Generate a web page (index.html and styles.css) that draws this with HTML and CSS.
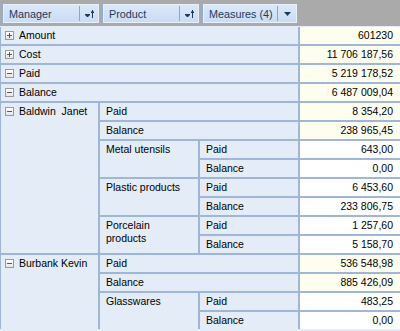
FILE: index.html
```html
<!DOCTYPE html>
<html>
<head>
<meta charset="utf-8">
<link rel="stylesheet" href="styles.css">
</head>
<body>
<div class="pivot">
  <div class="toolbar">
    <div class="fbtn w98"><span class="cap">Manager</span><span class="sep"></span><span class="ico"><svg width="10" height="9" viewBox="0 0 10 9"><path d="M0 5.5h5M0.5 6.5h4M1.5 7.5h2" stroke="#1e395b" stroke-width="1"/><path d="M7.5 1v8M6 3.5h3M6.5 2.5h2" stroke="#1e395b" stroke-width="1"/></svg></span></div>
    <div class="fbtn w98"><span class="cap">Product</span><span class="sep"></span><span class="ico"><svg width="10" height="9" viewBox="0 0 10 9"><path d="M0 5.5h5M0.5 6.5h4M1.5 7.5h2" stroke="#1e395b" stroke-width="1"/><path d="M7.5 1v8M6 3.5h3M6.5 2.5h2" stroke="#1e395b" stroke-width="1"/></svg></span></div>
    <div class="fbtn w96"><span class="cap">Measures (4)</span><span class="sep"></span><span class="ico"><svg width="7" height="4" viewBox="0 0 7 4"><path d="M0 0h7L3.5 4z" fill="#1e395b"/></svg></span></div>
  </div>
  <div class="grid">
    <div class="lbl s3"><span class="exp plus"></span>Amount</div><div class="val tot">601230</div>
    <div class="lbl s3"><span class="exp plus"></span>Cost</div><div class="val tot">11 706 187,56</div>
    <div class="lbl s3"><span class="exp minus"></span>Paid</div><div class="val tot">5 219 178,52</div>
    <div class="lbl s3"><span class="exp minus"></span>Balance</div><div class="val tot">6 487 009,04</div>

    <div class="lbl r8 top"><span class="exp minus"></span>Baldwin&nbsp; Janet</div>
    <div class="lbl s2 pad">Paid</div><div class="val tot">8 354,20</div>
    <div class="lbl s2 pad">Balance</div><div class="val tot">238 965,45</div>
    <div class="lbl r2 pad top">Metal utensils</div>
    <div class="lbl pad">Paid</div><div class="val">643,00</div>
    <div class="lbl pad">Balance</div><div class="val">0,00</div>
    <div class="lbl r2 pad top">Plastic products</div>
    <div class="lbl pad">Paid</div><div class="val">6 453,60</div>
    <div class="lbl pad">Balance</div><div class="val">233 806,75</div>
    <div class="lbl r2 pad top">Porcelain products</div>
    <div class="lbl pad">Paid</div><div class="val">1 257,60</div>
    <div class="lbl pad">Balance</div><div class="val">5 158,70</div>

    <div class="lbl r4 top"><span class="exp minus"></span>Burbank Kevin</div>
    <div class="lbl s2 pad">Paid</div><div class="val tot">536 548,98</div>
    <div class="lbl s2 pad">Balance</div><div class="val tot">885 426,09</div>
    <div class="lbl r2 pad top">Glasswares</div>
    <div class="lbl pad">Paid</div><div class="val">483,25</div>
    <div class="lbl pad">Balance</div><div class="val">0,00</div>
  </div>
</div>
</body>
</html>
```

FILE: styles.css
```css
html, body {
  margin: 0;
  padding: 0;
  width: 400px;
  height: 331px;
  overflow: hidden;
  background: #e4ecf7;
}
.pivot {
  font-family: "Liberation Sans", Arial, sans-serif;
  font-size: 10.5px;
  color: #000;
}
.toolbar {
  height: 26px;
  background: #aaaaaa;
  display: flex;
  gap: 2px;
  padding: 3px 0 0 2px;
  box-sizing: border-box;
}
.fbtn {
  height: 21px;
  box-sizing: border-box;
  border: 1px solid #8eaedb;
  background: linear-gradient(#dce8f8, #c9dcf4);
  box-shadow: inset 0 0 0 1px #e8f0fb;
  display: flex;
  align-items: center;
  color: #1e395b;
  font-size: 10.8px;
}
.w98 { width: 98px; }
.w96 { width: 96px; }
.cap {
  flex: 1;
  padding-left: 6px;
  white-space: nowrap;
}
.sep {
  width: 1px;
  height: 15px;
  background: #8aa6cc;
}
.ico {
  width: 19px;
  display: flex;
  justify-content: center;
  align-items: center;
}
.grid {
  display: grid;
  grid-template-columns: 97px 98px 98px 1fr;
  grid-auto-rows: 17px;
  gap: 2px;
  padding: 0 0 0 1px;
  border-top: 1px solid #e4ecf7;
  background: #9fb6d6;
}
.lbl {
  background: #e4ecf7;
  line-height: 13px;
  padding: 2px 8px 0 4px;
  white-space: normal;
  display: flex;
  align-items: flex-start;
}
.pad { padding-left: 6px; }
.s3 { grid-column: span 3; }
.s2 { grid-column: span 2; }
.r2 { grid-row: span 2; }
.r4 { grid-row: span 4; }
.r8 { grid-row: span 8; }
.val {
  background: #ffffff;
  text-align: right;
  padding: 2px 7px 0 0;
  line-height: 13px;
  white-space: nowrap;
}
.val.tot { background: #fefef0; }
.exp {
  width: 9px;
  height: 9px;
  box-sizing: border-box;
  border: 1px solid #9a9a9a;
  background: linear-gradient(#ffffff, #e6e6e6);
  margin: 2px 5px 0 0;
  position: relative;
  flex: none;
}
.exp::before {
  content: "";
  position: absolute;
  left: 1px;
  top: 3px;
  width: 5px;
  height: 1px;
  background: #5a5a5a;
}
.exp.plus::after {
  content: "";
  position: absolute;
  left: 3px;
  top: 1px;
  width: 1px;
  height: 5px;
  background: #5a5a5a;
}
```
